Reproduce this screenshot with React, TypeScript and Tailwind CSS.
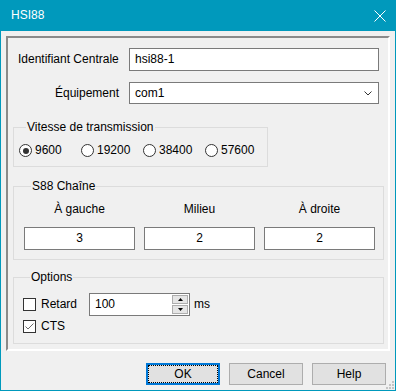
import React from "react";

const font = { fontFamily: '"Liberation Sans", Arial, sans-serif' };

const Radio: React.FC<{ label: string; checked?: boolean }> = ({ label, checked }) => (
    <div className="flex w-[62px] items-center">
        <div className="flex h-[13px] w-[13px] items-center justify-center rounded-full border border-[#333] bg-white">
            {checked && <div className="h-[6px] w-[6px] rounded-full bg-[#333]" />}
        </div>
        <span className="ml-[3px]">{label}</span>
    </div>
);

const Check: React.FC<{ label: string; checked?: boolean }> = ({ label, checked }) => (
    <div className="flex items-center">
        <div className="flex h-[13px] w-[13px] items-center justify-center border border-[#333] bg-white">
            {checked && (
                <svg width="11" height="11" viewBox="0 0 11 11">
                    <polyline points="1.5,5.5 4,8 9.5,2.5" fill="none" stroke="#6a6a6a" strokeWidth="1" />
                </svg>
            )}
        </div>
        <span className="ml-[5px]">{label}</span>
    </div>
);

const Group: React.FC<{ title: string; className: string; children: React.ReactNode }> = ({ title, className, children }) => (
    <fieldset className={`ml-[5px] border border-[#dcdcdc] ${className}`}>
        <legend className="ml-[7px] px-[1px] leading-[15px]">{title}</legend>
        {children}
    </fieldset>
);

const Button: React.FC<{ label: string; primary?: boolean }> = ({ label, primary }) => (
    <div
        className={`flex h-[22px] w-[74px] items-center justify-center bg-[#e1e1e1] ${
            primary ? "border-2 border-[#0078d7] p-0" : "border border-[#adadad]"
        }`}
    >
        {primary ? (
            <div className="flex h-full w-full items-center justify-center border border-dotted border-black">{label}</div>
        ) : (
            label
        )}
    </div>
);

const App: React.FC = () => {
    return (
        <div
            className="relative flex h-[391px] w-[396px] flex-col whitespace-nowrap border-x border-b border-[#0099bc] bg-[#f0f0f0] text-[12px] leading-[15px] text-black"
            style={font}
        >
            <div className="flex h-[31px] shrink-0 items-center justify-between bg-[#0099bc] pl-[10px] pr-[9px] text-white">
                <span>HSI88</span>
                <svg width="12" height="12" viewBox="0 0 12 12">
                    <path d="M0.5 0.5 L11.5 11.5 M11.5 0.5 L0.5 11.5" stroke="white" strokeWidth="1" />
                </svg>
            </div>

            <div className="ml-[5px] mt-[5px] flex h-[315px] w-[384px] shrink-0 flex-col border-2 border-b-white border-l-[#8a8a8a] border-r-white border-t-[#8a8a8a]">
                <div className="mt-[10px] flex items-center pl-[10px]">
                    <span className="w-[101px]">Identifiant Centrale</span>
                    <div className="ml-[10px] flex h-[23px] w-[250px] items-center border border-[#7a7a7a] bg-white pl-[5px]">hsi88-1</div>
                </div>
                <div className="mt-[11px] flex items-center pl-[10px]">
                    <span className="w-[101px] text-right">Équipement</span>
                    <div className="ml-[10px] flex h-[22px] w-[250px] items-center justify-between border border-[#7a7a7a] bg-white pl-[5px] pr-[6px]">
                        <span>com1</span>
                        <svg width="8" height="5" viewBox="0 0 8 5">
                            <polyline points="0.5,0.5 4,4 7.5,0.5" fill="none" stroke="#333" strokeWidth="1" />
                        </svg>
                    </div>
                </div>

                <Group title="Vitesse de transmission" className="mt-[16px] w-[254px] pb-[8px] pl-[5px]">
                    <div className="mt-[8px] flex h-[15px] items-center">
                        <Radio label="9600" checked />
                        <Radio label="19200" />
                        <Radio label="38400" />
                        <Radio label="57600" />
                    </div>
                </Group>

                <Group title="S88 Chaîne" className="mt-[12px] w-[371px] pb-[9px] pl-[10px]">
                    <div className="mt-[8px] flex gap-[9px]">
                        {[
                            ["À gauche", "3"],
                            ["Milieu", "2"],
                            ["À droite", "2"],
                        ].map(([name, value]) => (
                            <div key={name} className="flex w-[111px] flex-col items-center">
                                <span>{name}</span>
                                <div className="mt-[10px] flex h-[23px] w-full items-center justify-center border border-[#7a7a7a] bg-white">
                                    {value}
                                </div>
                            </div>
                        ))}
                    </div>
                </Group>

                <Group title="Options" className="mt-[10px] w-[371px] pb-[9px] pl-[9px]">
                    <div className="mt-[8px] flex h-[23px] items-center">
                        <div className="w-[66px]">
                            <Check label="Retard" />
                        </div>
                        <div className="flex h-[23px] w-[101px] items-center justify-between border border-[#7a7a7a] bg-white pl-[5px] pr-[1px]">
                            <span>100</span>
                            <div className="flex h-full flex-col gap-[1px] py-[1px]">
                                <div className="flex h-[9px] w-[16px] items-center justify-center border border-[#adadad] bg-[#e5e5e5]">
                                    <svg width="5" height="3" viewBox="0 0 5 3">
                                        <polygon points="0,3 2.5,0 5,3" fill="#000" />
                                    </svg>
                                </div>
                                <div className="flex h-[9px] w-[16px] items-center justify-center border border-[#adadad] bg-[#e5e5e5]">
                                    <svg width="5" height="3" viewBox="0 0 5 3">
                                        <polygon points="0,0 2.5,3 5,0" fill="#000" />
                                    </svg>
                                </div>
                            </div>
                        </div>
                        <span className="ml-[4px]">ms</span>
                    </div>
                    <div className="mt-[3px] flex h-[15px] items-center">
                        <Check label="CTS" checked />
                    </div>
                </Group>
            </div>

            <div className="mt-[12px] flex justify-end gap-[9px] pr-[9px]">
                <Button label="OK" primary />
                <Button label="Cancel" />
                <Button label="Help" />
            </div>

            <svg className="absolute bottom-0 right-0" width="9" height="9" viewBox="0 0 9 9">
                <rect x="6" y="0" width="2" height="2" fill="#c4c4c4" />
                <rect x="3" y="3" width="2" height="2" fill="#c4c4c4" />
                <rect x="6" y="3" width="2" height="2" fill="#c4c4c4" />
                <rect x="0" y="6" width="2" height="2" fill="#c4c4c4" />
                <rect x="3" y="6" width="2" height="2" fill="#c4c4c4" />
                <rect x="6" y="6" width="2" height="2" fill="#c4c4c4" />
            </svg>
        </div>
    );
};

export default App;
